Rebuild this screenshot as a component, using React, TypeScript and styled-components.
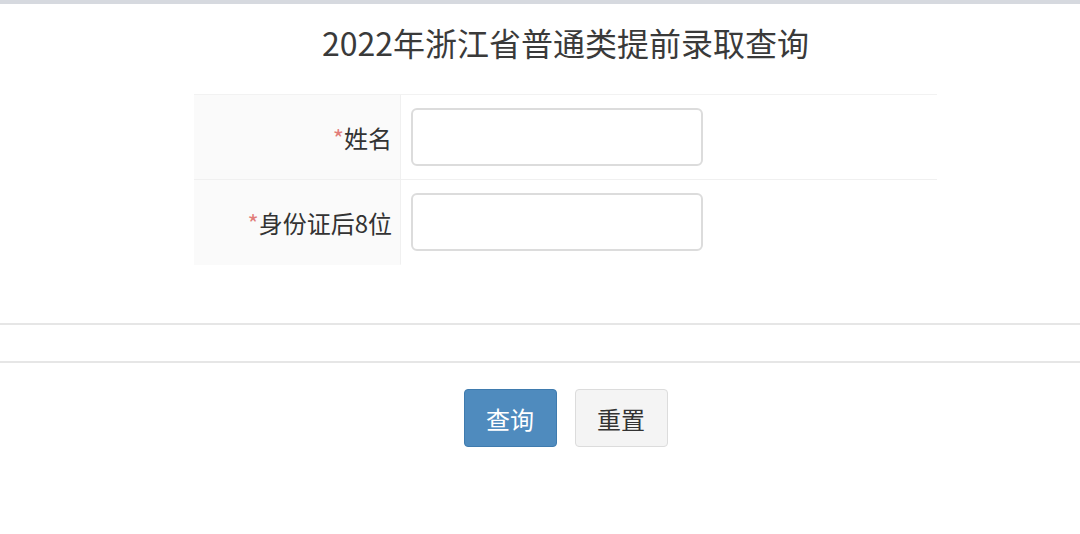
import styled, { createGlobalStyle } from "styled-components";

const GlobalStyle = createGlobalStyle`
  html, body {
    margin: 0;
    padding: 0;
    background: #ffffff;
    font-family: "Noto Sans CJK SC", "Noto Sans", sans-serif;
    color: #333333;
  }
`;

const TopBar = styled.div`
  height: 4px;
  background: #d6d9df;
`;

const Content = styled.div`
  box-sizing: border-box;
  width: 743px;
  margin-left: 194px;
`;

const Title = styled.h1`
  margin: 18px 0 0;
  height: 72px;
  font-size: 32px;
  font-weight: 400;
  line-height: 40px;
  text-align: center;
  color: #3a3a3a;
`;

const FormTable = styled.div`
  display: grid;
  grid-template-columns: 207px 1fr;
  border-top: 1px solid #f2f2f2;
`;

const LabelCell = styled.div<{ $last?: boolean }>`
  box-sizing: border-box;
  height: 85px;
  display: flex;
  align-items: center;
  justify-content: flex-end;
  padding-right: 8px;
  background: #fafafa;
  border-right: 1px solid #f0f0f0;
  border-bottom: 1px solid ${(p) => (p.$last ? "transparent" : "#f0f0f0")};
  font-size: 24px;
  color: #333333;
`;

const Required = styled.span`
  color: #d9534f;
  opacity: 0.75;
`;

const FieldCell = styled.div<{ $last?: boolean }>`
  box-sizing: border-box;
  height: 85px;
  display: flex;
  align-items: center;
  padding-left: 10px;
  border-bottom: 1px solid ${(p) => (p.$last ? "transparent" : "#f0f0f0")};
`;

const TextInput = styled.input`
  box-sizing: border-box;
  width: 292px;
  height: 58px;
  border: 2px solid #dcdcdc;
  border-radius: 6px;
  background: #fff;
  font-size: 20px;
  outline: none;
`;

const Divider = styled.div<{ $top: number }>`
  margin-top: ${(p) => p.$top}px;
  height: 2px;
  background: #e6e6e6;
`;

const Actions = styled.div`
  display: flex;
  justify-content: center;
  gap: 18px;
  margin-top: 26px;
`;

const Button = styled.button<{ $primary?: boolean }>`
  box-sizing: border-box;
  width: 93px;
  height: 58px;
  border-radius: 4px;
  font-family: inherit;
  font-size: 24px;
  cursor: pointer;
  border: 1px solid ${(p) => (p.$primary ? "#3f7bae" : "#dcdcdc")};
  background: ${(p) => (p.$primary ? "#4f8bbe" : "#f4f4f4")};
  color: ${(p) => (p.$primary ? "#ffffff" : "#333333")};
`;

const fields = ["姓名", "身份证后8位"];

export default function App() {
  return (
    <>
      <GlobalStyle />
      <TopBar />
      <Content>
        <Title>2022年浙江省普通类提前录取查询</Title>
        <FormTable>
          {fields.map((f, i) => {
            const last = i === fields.length - 1;
            return [
              <LabelCell key={f + "l"} $last={last}>
                <Required>*</Required>
                {f}
              </LabelCell>,
              <FieldCell key={f + "f"} $last={last}>
                <TextInput type="text" />
              </FieldCell>,
            ];
          })}
        </FormTable>
      </Content>
      <Divider $top={58} />
      <Divider $top={36} />
      <Content>
        <Actions>
          <Button $primary>查询</Button>
          <Button>重置</Button>
        </Actions>
      </Content>
    </>
  );
}
